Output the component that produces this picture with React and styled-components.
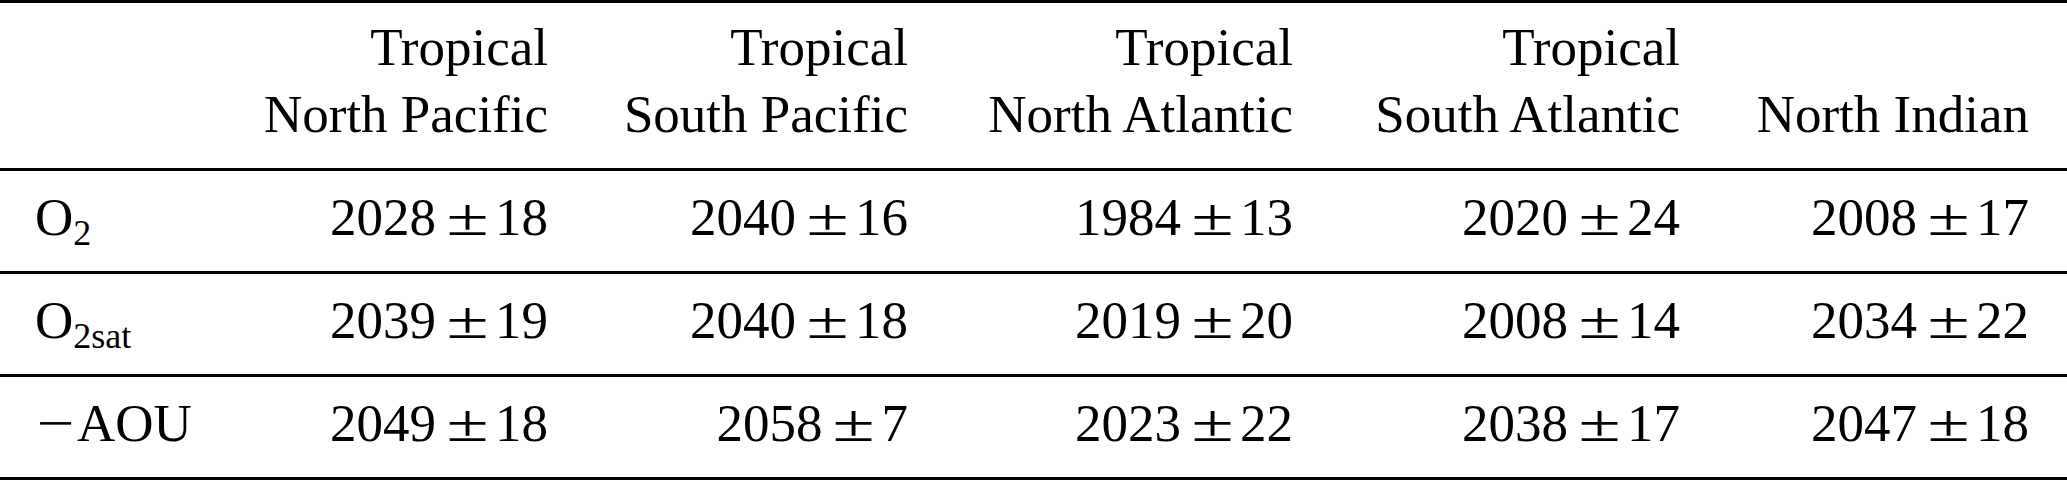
import React from 'react'
import styled, { createGlobalStyle } from 'styled-components'

const GlobalStyle = createGlobalStyle`
  html, body {
    margin: 0;
    padding: 0;
    background: #fff;
    overflow: hidden;
  }
  body {
    font-family: "Liberation Serif", "Times New Roman", serif;
    color: #000;
  }
`;

const columns = ['Tropical\nNorth Pacific', 'Tropical\nSouth Pacific', 'Tropical\nNorth Atlantic', 'Tropical\nSouth Atlantic', 'North Indian'];

const rows = [
  { label: 'O2', sub: '2', values: [[2028, 18], [2040, 16], [1984, 13], [2020, 24], [2008, 17]] },
  { label: 'O2sat', sub: '2sat', values: [[2039, 19], [2040, 18], [2019, 20], [2008, 14], [2034, 22]] },
  { label: '-AOU', values: [[2049, 18], [2058, 7], [2023, 22], [2038, 17], [2047, 18]] },
];

const Table = styled.div`
  width: 2067px;
  border-top: 3px solid #000;
  font-size: 53px;
`;

const Row = styled.div`
  display: grid;
  grid-template-columns: 226px 360px 360px 385px 387px 349px;
  height: ${({ $head }) => ($head ? '165px' : '100px')};
  border-bottom: 3px solid #000;
`;

const Cell = styled.div`
  text-align: ${({ $first }) => ($first ? 'left' : 'right')};
  padding: ${({ $head }) => ($head ? '11px' : '20px')} ${({ $first }) => ($first ? '0' : '38px')} 0 ${({ $first }) => ($first ? '35px' : '0')};
  line-height: ${({ $head }) => ($head ? '67px' : '53px')};
  white-space: ${({ $head }) => ($head ? 'pre-line' : 'nowrap')};
`;

const Sub = styled.span`
  font-size: 36px;
  line-height: 0;
  vertical-align: -10px;
`;

const Pm = styled.span`
  display: inline-block;
  transform: scaleX(1.45);
  margin: 0 13px 0 17px;
`;

const Minus = styled.span`
  display: inline-block;
  transform: scaleX(1.26);
  margin: 0 6px 0 6px;
`;

const Label = ({ row }) => {
  if (row.sub) {
    return <>O<Sub>{row.sub}</Sub></>
  }
  return <><Minus>−</Minus>AOU</>
}

const App = () => {
  return (
    <>
      <GlobalStyle />
      <Table>
        {/* header */}
        <Row $head>
          <Cell $head $first />
          {columns.map((c) => (
            <Cell $head key={c}>{c.includes('\n') ? c : '\n' + c}</Cell>
          ))}
        </Row>

        {rows.map((row) => (
          <Row key={row.label}>
            <Cell $first><Label row={row} /></Cell>
            {row.values.map(([v, e], i) => (
              <Cell key={i}>{v}<Pm>±</Pm>{e}</Cell>
            ))}
          </Row>
        ))}
      </Table>
    </>
  )
}

export default App
